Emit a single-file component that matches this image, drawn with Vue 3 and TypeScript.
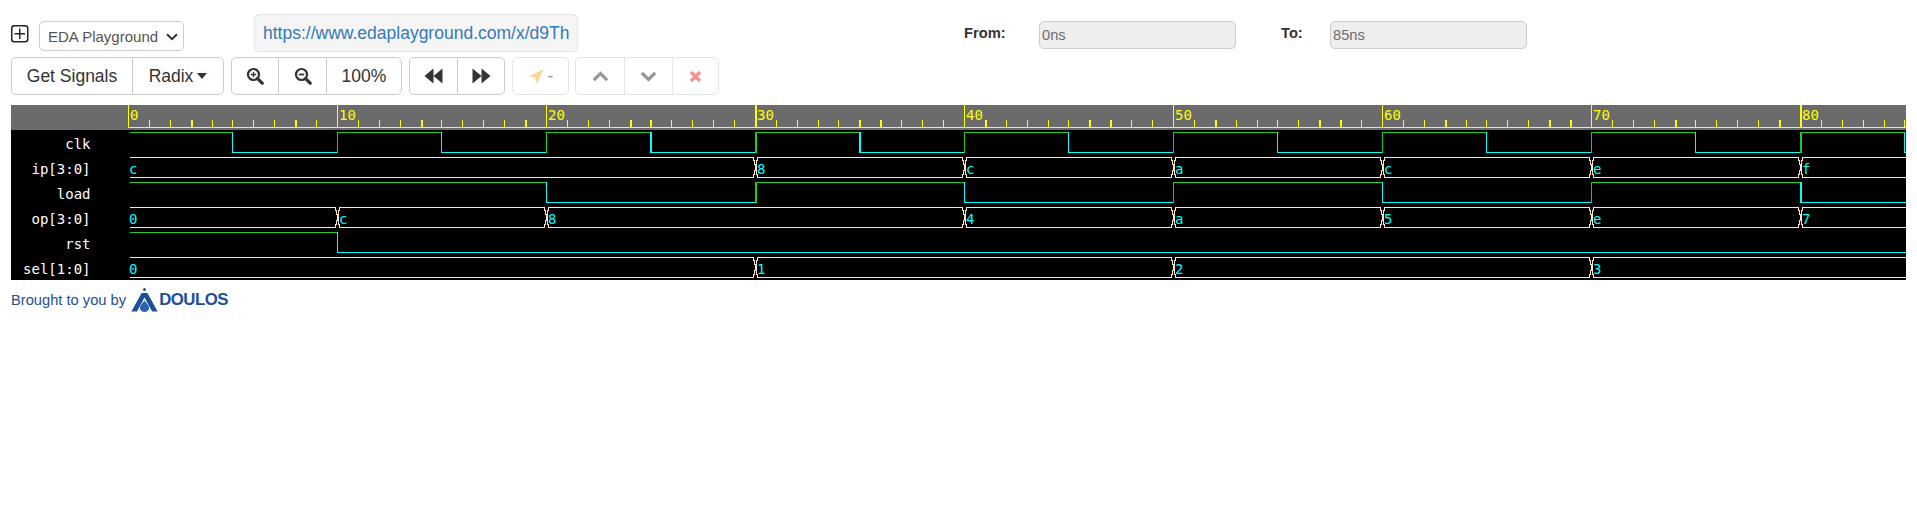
<script setup lang="ts">
const thickTimes = new Set([3, 8, 14, 19, 24, 25, 30, 35, 36, 41, 46, 47, 52, 57, 58, 63, 68, 69, 74, 79, 80])
const px = (t: number) => Math.floor(128.4 + 20.9 * t)
const w = (t: number) => (thickTimes.has(t) ? 2 : 1)

interface R { x: number; y: number; w: number; h: number; c: string }
const YELLOW = '#ffff00'
const GREEN = '#22cc22'
const CYAN = '#00ffff'
const BUS = '#ffe4c4'
const END = 1906

const rulerRects: R[] = [{ x: 128, y: 127, w: END - 128, h: 1, c: YELLOW }]
const rulerLabels: { x: number; text: string }[] = []
for (let t = 0; t <= 85; t++) {
  if (t % 10 === 0) {
    rulerRects.push({ x: px(t), y: 105, w: w(t), h: 22, c: YELLOW })
    rulerLabels.push({ x: px(t) + 2, text: String(t) })
  } else {
    rulerRects.push({ x: px(t), y: 120, w: w(t), h: 7, c: YELLOW })
  }
}

const labels = ['clk', 'ip[3:0]', 'load', 'op[3:0]', 'rst', 'sel[1:0]']
const rowTop = (i: number) => 132 + 25 * i

function digital(i: number, start: boolean, times: number[]): R[] {
  const top = rowTop(i)
  const out: R[] = []
  let level = start
  let from = 130
  for (const t of times) {
    const x = px(t)
    out.push({ x: from, y: level ? top : top + 20, w: x - from + 1, h: 1, c: level ? GREEN : CYAN })
    level = !level
    out.push({ x, y: top, w: w(t), h: 21, c: level ? GREEN : CYAN })
    from = x + w(t)
  }
  if (from < END) out.push({ x: from, y: level ? top : top + 20, w: END - from, h: 1, c: level ? GREEN : CYAN })
  return out
}

function bus(i: number, vals: [number, string][]): { rects: R[]; texts: { x: number; y: number; text: string }[] } {
  const top = rowTop(i)
  const rects: R[] = []
  const texts: { x: number; y: number; text: string }[] = []
  let from = 130
  vals.forEach(([t, v]) => {
    if (t > 0) {
      const x = px(t)
      for (const y of [top, top + 20]) rects.push({ x: from, y, w: x - 1 - from, h: 1, c: BUS })
      const side = (a: number, b: number, c: number) => {
        rects.push({ x: a, y: top, w: 1, h: 4, c: BUS })
        rects.push({ x: b, y: top + 3, w: 1, h: 5, c: BUS })
        rects.push({ x: c, y: top + 7, w: 1, h: 7, c: BUS })
        rects.push({ x: b, y: top + 13, w: 1, h: 5, c: BUS })
        rects.push({ x: a, y: top + 17, w: 1, h: 4, c: BUS })
      }
      side(x - 2, x - 1, x)
      side(x + 2, x + 1, x + 1)
      from = x + 2
    }
    texts.push({ x: t === 0 ? 129 : px(t) + 2, y: top + 17, text: v })
  })
  for (const y of [top, top + 20]) rects.push({ x: from, y, w: END - from, h: 1, c: BUS })
  return { rects, texts }
}

const clkTimes: number[] = []
for (let t = 5; t <= 85; t += 5) clkTimes.push(t)

const ip = bus(1, [[0, 'c'], [30, '8'], [40, 'c'], [50, 'a'], [60, 'c'], [70, 'e'], [80, 'f']])
const op = bus(3, [[0, '0'], [10, 'c'], [20, '8'], [40, '4'], [50, 'a'], [60, '5'], [70, 'e'], [80, '7']])
const sel = bus(5, [[0, '0'], [30, '1'], [50, '2'], [70, '3']])

const waveRects: R[] = [
  ...digital(0, true, clkTimes),
  ...ip.rects,
  ...digital(2, true, [20, 30, 40, 50, 60, 70, 80]),
  ...op.rects,
  ...digital(4, true, [10]),
  ...sel.rects
]
const valueTexts = [...ip.texts, ...op.texts, ...sel.texts]
</script>

<template>
  <div class="page">
    <div class="row-top">
      <svg class="add-icon" width="18" height="18" viewBox="0 0 18 18">
        <rect x="0.75" y="0.75" width="16" height="16" rx="2.5" fill="none" stroke="#222" stroke-width="1.5" />
        <path d="M8.75 3.5v10.5M3.5 8.75h10.5" stroke="#222" stroke-width="1.4" fill="none" />
      </svg>
      <div class="picker-wrap">
        <select class="picker">
          <option>EDA Playground</option>
        </select>
        <svg class="picker-arrow" width="12" height="8" viewBox="0 0 12 8">
          <path d="M1 1.2l5 5 5-5" fill="none" stroke="#333" stroke-width="2" />
        </svg>
      </div>
      <div class="url-well"><a class="url">https://www.edaplayground.com/x/d9Th</a></div>
      <label class="range-label from-label">From:</label>
      <input class="range-input" value="0ns" disabled />
      <label class="range-label to-label">To:</label>
      <input class="range-input" value="85ns" disabled />
    </div>

    <div class="row-buttons">
      <div class="group">
        <button class="btn btn-signals">Get Signals</button>
        <button class="btn btn-radix">Radix<span class="caret"></span></button>
      </div>
      <div class="group">
        <button class="btn btn-zoom">
          <svg width="18" height="18" viewBox="0 0 18 18">
            <circle cx="7.5" cy="7.5" r="5.5" fill="none" stroke="#333" stroke-width="2.2" />
            <path d="M7.5 4.8v5.4M4.8 7.5h5.4" stroke="#333" stroke-width="1.4" />
            <path d="M11.6 11.6l4.6 4.6" stroke="#333" stroke-width="3.2" stroke-linecap="round" />
          </svg>
        </button>
        <button class="btn btn-zoom2">
          <svg width="18" height="18" viewBox="0 0 18 18">
            <circle cx="7.5" cy="7.5" r="5.5" fill="none" stroke="#333" stroke-width="2.2" />
            <path d="M4.8 7.5h5.4" stroke="#333" stroke-width="1.8" />
            <path d="M11.6 11.6l4.6 4.6" stroke="#333" stroke-width="3.2" stroke-linecap="round" />
          </svg>
        </button>
        <button class="btn btn-pct">100%</button>
      </div>
      <div class="group">
        <button class="btn btn-back">
          <svg width="19" height="16" viewBox="0 0 19 16"><path d="M9.5 0.5v15L0.5 8zM18.5 0.5v15L9.5 8z" fill="#333" /></svg>
        </button>
        <button class="btn btn-fwd">
          <svg width="19" height="16" viewBox="0 0 19 16"><path d="M0.5 0.5v15L9.5 8zM9.5 0.5v15L18.5 8z" fill="#333" /></svg>
        </button>
      </div>
      <div class="group muted">
        <button class="btn btn-locate">
          <svg width="16" height="15" viewBox="0 0 16 15"><path d="M15.5 0.5L8.6 14.5 7.2 8.2 0.5 7.4z" fill="#fca61f" /></svg>
          <span class="dash">-</span>
        </button>
      </div>
      <div class="group muted last">
        <button class="btn btn-ctrl">
          <svg width="17" height="11" viewBox="0 0 17 11"><path d="M1.8 9.2L8.5 2.6l6.7 6.6" fill="none" stroke="#333" stroke-width="3.2" /></svg>
        </button>
        <button class="btn btn-ctrl2">
          <svg width="17" height="11" viewBox="0 0 17 11"><path d="M1.8 1.8L8.5 8.4l6.7-6.6" fill="none" stroke="#333" stroke-width="3.2" /></svg>
        </button>
        <button class="btn btn-ctrl3">
          <svg width="13" height="13" viewBox="0 0 13 13"><path d="M2 2l9 9M11 2l-9 9" fill="none" stroke="#ff2020" stroke-width="3.4" /></svg>
        </button>
      </div>
    </div>

    <svg class="wave" width="1895" height="175" viewBox="11 105 1895 175" shape-rendering="crispEdges">
      <rect x="11" y="105" width="1895" height="25" fill="#6b6b6b" />
      <rect x="11" y="130" width="1895" height="150" fill="#000" />
      <rect v-for="(r, i) in rulerRects" :key="'r' + i" :x="r.x" :y="r.y" :width="r.w" :height="r.h" :fill="r.c" />
      <text v-for="l in rulerLabels" :key="l.text" class="ruler-text" :x="l.x" y="120">{{ l.text }}</text>
      <rect v-for="(r, i) in waveRects" :key="'w' + i" :x="r.x" :y="r.y" :width="r.w" :height="r.h" :fill="r.c" />
      <text v-for="(l, i) in labels" :key="l" class="signal-text" x="90.5" :y="149 + 25 * i" text-anchor="end">{{ l }}</text>
      <text v-for="(v, i) in valueTexts" :key="'v' + i" class="value-text" :x="v.x" :y="v.y">{{ v.text }}</text>
    </svg>

    <div class="credit">
      <span>Brought to you by</span>
      <svg class="logo-mark" width="27" height="24" viewBox="0 0 27 24">
        <circle cx="13.5" cy="1.6" r="1.5" fill="#1b4f9c" />
        <path d="M10.6 5h5.8l10.2 18.5h-5.5L13.5 9.5 6 23.5H0.4z" fill="#1b4f9c" />
        <path d="M13.5 12.5c2.8 3.2 4.6 5.4 4.6 7.4a4.6 4 0 0 1-9.2 0c0-2 1.8-4.2 4.6-7.4z" fill="#2a63b5" />
      </svg>
      <span class="logo-text">DOULOS</span>
    </div>
  </div>
</template>

<style scoped>
.page {
  font-family: "Liberation Sans", Arial, sans-serif;
  color: #333;
}
.row-top {
  display: flex;
  align-items: flex-start;
  height: 43px;
  padding: 14px 0 0 11px;
}
.add-icon {
  margin-top: 11px;
}
.picker-wrap {
  position: relative;
  width: 145px;
  height: 30px;
  margin: 7px 0 0 10px;
}
.picker {
  display: block;
  box-sizing: border-box;
  width: 100%;
  height: 100%;
  padding: 1px 0 0 8px;
  appearance: none;
  font: 15px "Liberation Sans", Arial, sans-serif;
  color: #555;
  background: #fff;
  border: 1px solid #ccc;
  border-radius: 5px;
}
.picker-arrow {
  position: absolute;
  top: 12px;
  right: 6px;
  pointer-events: none;
}
.url-well {
  box-sizing: border-box;
  width: 324px;
  height: 38px;
  margin-left: 70px;
  padding: 0 8px;
  line-height: 36px;
  white-space: nowrap;
  background: #f5f5f5;
  border: 1px solid #e3e3e3;
  border-radius: 5px;
}
.url {
  font-size: 17.5px;
  color: #337ab7;
}
.range-label {
  margin-top: 11px;
  font-size: 14.7px;
  line-height: 17px;
  font-weight: 700;
  color: #333;
}
.from-label {
  margin-left: 386px;
  width: 75px;
}
.to-label {
  margin-left: 45px;
  width: 49px;
}
.range-input {
  box-sizing: border-box;
  width: 197px;
  height: 28px;
  margin-top: 7px;
  padding: 0 2px;
  font: 14.7px "Liberation Sans", Arial, sans-serif;
  color: #6d6d6d;
  background: #eee;
  border: 1px solid #ccc;
  border-radius: 5px;
}
.row-buttons {
  display: flex;
  height: 38px;
  padding-left: 11px;
  gap: 7px;
}
.group {
  display: flex;
  height: 38px;
}
.group.muted {
  opacity: 0.5;
}
.group.last {
  margin-left: -1px;
}
.btn {
  box-sizing: border-box;
  display: flex;
  align-items: center;
  justify-content: center;
  height: 38px;
  padding: 0;
  margin-left: -1px;
  font: 17.5px "Liberation Sans", Arial, sans-serif;
  color: #333;
  background: #fff;
  border: 1px solid #ccc;
}
.btn:first-child {
  margin-left: 0;
  border-radius: 5px 0 0 5px;
}
.btn:last-child {
  border-radius: 0 5px 5px 0;
}
.btn:only-child {
  border-radius: 5px;
}
.btn-signals { width: 122px; }
.btn-radix { width: 92px; }
.btn-zoom { width: 48px; }
.btn-zoom2 { width: 49px; }
.btn-pct { width: 76px; }
.btn-back { width: 49px; }
.btn-fwd { width: 48px; }
.btn-locate { width: 57px; gap: 4px; }
.btn-ctrl { width: 50px; }
.btn-ctrl2 { width: 49px; }
.btn-ctrl3 { width: 47px; }
.caret {
  width: 0;
  height: 0;
  margin-left: 4px;
  border-top: 6px solid #333;
  border-left: 5.5px solid transparent;
  border-right: 5.5px solid transparent;
}
.dash {
  color: #333;
  font-size: 17.5px;
}
.wave {
  display: block;
  margin: 10px 0 0 11px;
}
.ruler-text,
.signal-text,
.value-text {
  font-family: "DejaVu Sans Mono", monospace;
  font-size: 14px;
}
.ruler-text { fill: #ffff00; }
.signal-text { fill: #fff; }
.value-text { fill: #00ffff; }
.credit {
  display: flex;
  align-items: center;
  height: 39px;
  padding-left: 11px;
  font-size: 14.7px;
  color: #1f4e9c;
}
.logo-mark {
  margin-left: 5px;
}
.logo-text {
  margin-left: 1px;
  font-size: 16.8px;
  font-weight: 700;
  letter-spacing: -0.5px;
  color: #1b4f9c;
}
</style>
